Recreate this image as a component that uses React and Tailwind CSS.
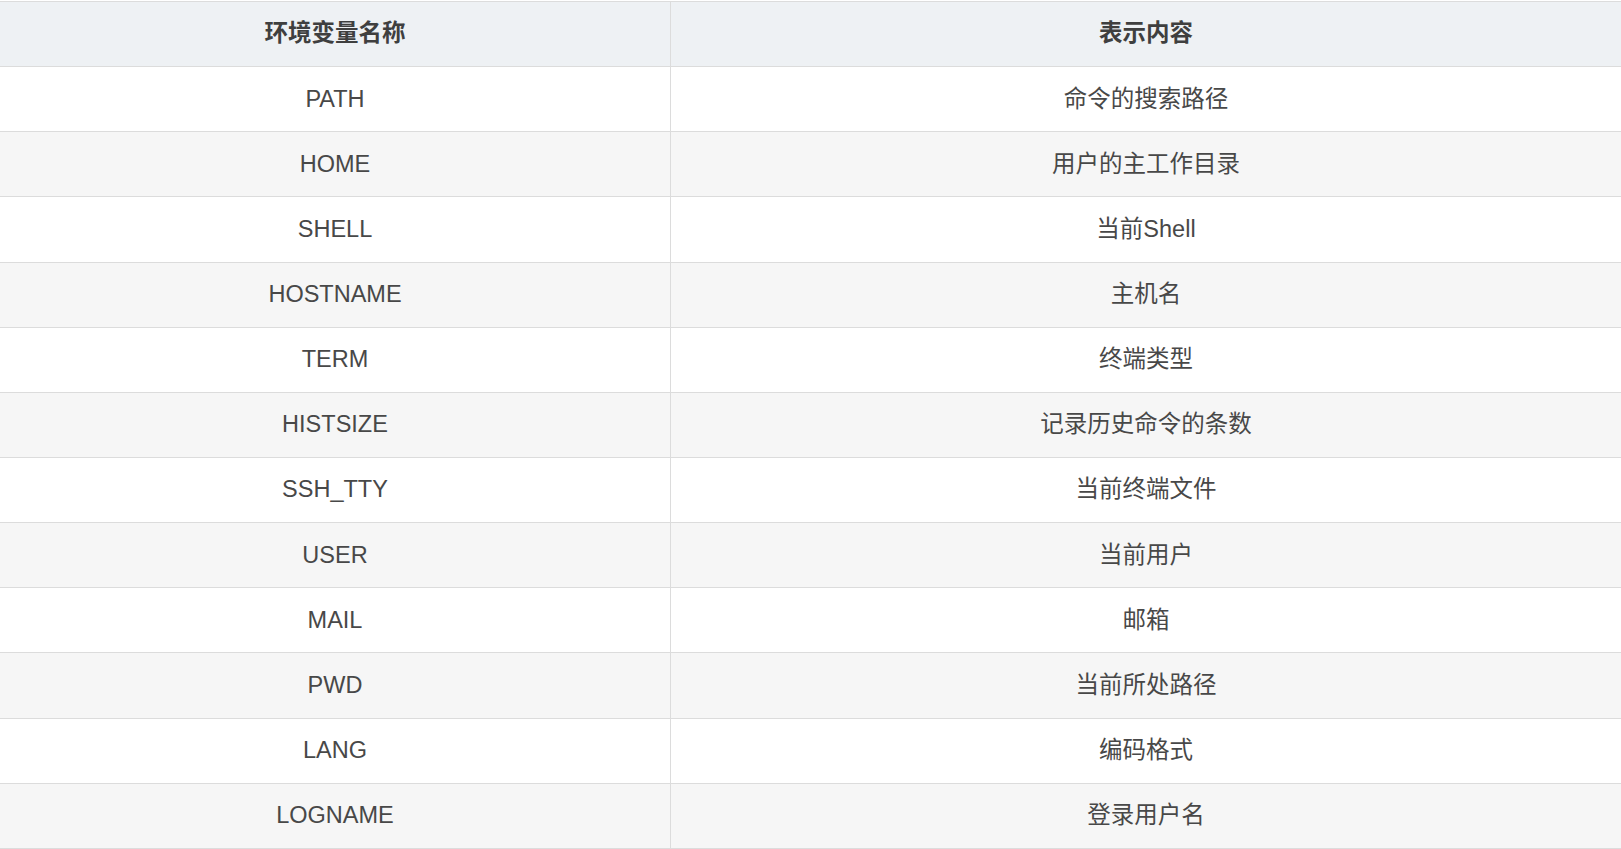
const rows = [
  ['PATH', '命令的搜索路径'],
  ['HOME', '用户的主工作目录'],
  ['SHELL', '当前Shell'],
  ['HOSTNAME', '主机名'],
  ['TERM', '终端类型'],
  ['HISTSIZE', '记录历史命令的条数'],
  ['SSH_TTY', '当前终端文件'],
  ['USER', '当前用户'],
  ['MAIL', '邮箱'],
  ['PWD', '当前所处路径'],
  ['LANG', '编码格式'],
  ['LOGNAME', '登录用户名'],
];

export default function App() {
  return (
    <div
      className="w-[1621px] h-[849px] bg-white overflow-hidden pt-px text-[23.5px] text-[#484848]"
      style={{ fontFamily: '"Liberation Sans", "Noto Sans CJK SC", sans-serif' }}
    >
      <div className="border-t border-[#dcdcdc]">
        {/* header */}
        <div className="grid grid-cols-[671px_1fr] h-[65.15px] bg-[#eef1f4] border-b border-[#dcdcdc] font-bold text-[#3f3f3f]">
          <div className="flex items-center justify-center border-r border-[#dcdcdc]">环境变量名称</div>
          <div className="flex items-center justify-center">表示内容</div>
        </div>

        {rows.map(([name, desc], i) => (
          <div
            key={name}
            className={`grid grid-cols-[671px_1fr] h-[65.15px] border-b border-[#dcdcdc] ${
              i % 2 === 1 ? 'bg-[#f6f6f6]' : 'bg-white'
            }`}
          >
            <div className="flex items-center justify-center border-r border-[#dcdcdc]">{name}</div>
            <div className="flex items-center justify-center">{desc}</div>
          </div>
        ))}
      </div>
    </div>
  );
}
